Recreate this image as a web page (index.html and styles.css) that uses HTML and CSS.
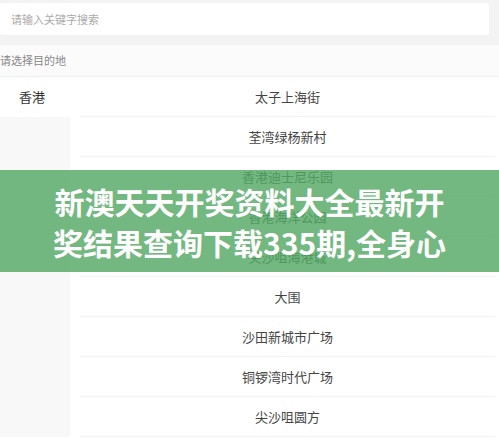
FILE: index.html
```html
<!DOCTYPE html>
<html lang="zh-CN">
<head>
    <meta charset="UTF-8">
    <meta name="viewport" content="width=device-width, initial-scale=1.0">
    <title>请选择目的地</title>
    <link rel="stylesheet" href="styles.css">
</head>
<body>
    <div class="search-bar">
        <div class="search-input">请输入关键字搜索</div>
    </div>

    <div class="title">请选择目的地</div>

    <div class="main">
        <div class="side">
            <div class="side-item active">香港</div>
        </div>
        <ul class="list">
            <li>太子上海街</li>
            <li>荃湾绿杨新村</li>
            <li>香港迪士尼乐园</li>
            <li>香港海洋公园</li>
            <li>尖沙咀海港城</li>
            <li>大围</li>
            <li>沙田新城市广场</li>
            <li>铜锣湾时代广场</li>
            <li>尖沙咀圆方</li>
        </ul>
    </div>

    <!-- 横幅 -->
    <div class="banner">新澳天天开奖资料大全最新开<br>奖结果查询下载335期,全身心</div>
</body>
</html>
```
FILE: styles.css
```css
body {
    margin: 0;
    font-family: "Noto Sans CJK SC", "Noto Sans", sans-serif;
    background: #fff;
    color: #333;
    height: 443px;
    overflow: hidden;
}

.search-bar {
    background: #f3f3f3;
    padding: 3px 10px 10px 0;
}

.search-input {
    background: #fff;
    height: 32px;
    line-height: 32px;
    border-radius: 3px;
    padding-left: 11px;
    font-size: 11px;
    color: #aaa;
}

.title {
    height: 31px;
    line-height: 31px;
    font-size: 11px;
    color: #888;
    background: #fbfbfb;
    border-bottom: 1px solid #eee;
}

.main {
    display: flex;
}

.side {
    width: 70px;
    background: #f8f8f8;
}

.side-item {
    height: 40px;
    line-height: 40px;
    padding-left: 19px;
    font-size: 13px;
    color: #333;
}

.side-item.active {
    background: #fff;
}

.list {
    flex: 1;
    list-style: none;
    margin: 0;
    padding: 0 4px 0 10px;
}

.list li {
    height: 39px;
    line-height: 39px;
    text-align: center;
    font-size: 13px;
    color: #444;
    border-bottom: 1px solid #f2f2f2;
}

.banner {
    position: absolute;
    left: 0;
    right: 0;
    top: 170px;
    height: 102px;
    box-sizing: border-box;
    padding-top: 11px;
    background: rgba(83, 168, 100, 0.82);
    color: #fff;
    font-size: 30px;
    font-weight: 700;
    line-height: 41px;
    text-align: center;
}
```
